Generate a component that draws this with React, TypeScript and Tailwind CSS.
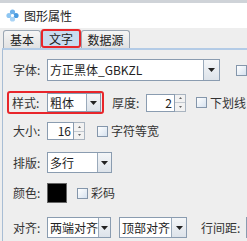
import React from "react";

const font = { fontFamily: '"Noto Sans CJK SC", "Noto Sans", sans-serif' };

function Arrow({ w }: { w: number }) {
  return (
    <div
      className="h-full shrink-0 flex items-center justify-center border-l border-[#9aaabb] bg-gradient-to-b from-[#f4f6f8] to-[#dde3ea]"
      style={{ width: w }}
    >
      <svg width="7" height="4" viewBox="0 0 7 4">
        <path d="M0 0 L7 0 L3.5 4 Z" fill="#222" />
      </svg>
    </div>
  );
}

function Combo({
  text,
  width,
  height = 21,
  arrow = 15,
}: {
  text: string;
  width: number;
  height?: number;
  arrow?: number;
}) {
  return (
    <div className="flex items-stretch border border-[#8a9cb0] bg-white" style={{ width, height }}>
      <div className="flex-1 flex items-center pl-[2px] text-[12px] text-[#222] overflow-hidden whitespace-nowrap">
        {text}
      </div>
      <Arrow w={arrow} />
    </div>
  );
}

function Spinner({ value, width }: { value: string; width: number }) {
  return (
    <div className="flex items-stretch h-[18px]" style={{ width }}>
      <div className="flex-1 flex items-center justify-end pr-[2px] border border-[#8a9cb0] bg-white text-[12px] text-[#222]">
        {value}
      </div>
      <div className="w-[11px] flex flex-col border border-l-0 border-[#a9b4c0] bg-[#f2f2f2]">
        <div className="flex-1 flex items-center justify-center border-b border-[#c3c9d0]">
          <svg width="3" height="2" viewBox="0 0 3 2">
            <path d="M0 2 L1.5 0 L3 2 Z" fill="#666" />
          </svg>
        </div>
        <div className="flex-1 flex items-center justify-center">
          <svg width="3" height="2" viewBox="0 0 3 2">
            <path d="M0 0 L3 0 L1.5 2 Z" fill="#666" />
          </svg>
        </div>
      </div>
    </div>
  );
}

function Check({ label }: { label?: string }) {
  return (
    <div className="flex items-center gap-[3px]">
      <div className="w-[11px] h-[11px] border border-[#8496ab] bg-gradient-to-br from-[#ffffff] to-[#d6e2ef]" />
      {label && <span className="text-[12px] text-[#333]">{label}</span>}
    </div>
  );
}

function Label({ text, w = 34 }: { text: string; w?: number }) {
  return (
    <span className="text-[12px] text-[#333] shrink-0" style={{ width: w }}>
      {text}
    </span>
  );
}

export default function App() {
  return (
    <div className="w-[247px] h-[241px] overflow-hidden bg-[#eeeeee] relative" style={font}>
      <div className="h-[3px] bg-[#cfd3d8]" />
      <div className="h-[25px] bg-white flex items-center pl-[6px] gap-[5px]">
        <svg width="13" height="13" viewBox="0 0 13 13">
          <circle cx="6.5" cy="3" r="2.6" fill="#6fb2ea" />
          <circle cx="3" cy="6.5" r="2.6" fill="#8ec6f2" />
          <circle cx="10" cy="6.5" r="2.6" fill="#4a9be0" />
          <circle cx="6.5" cy="10" r="2.6" fill="#a9d3f5" />
          <circle cx="6.5" cy="6.5" r="1.6" fill="#ffffff" />
        </svg>
        <span className="text-[12px] text-[#222]">图形属性</span>
      </div>
      <div className="h-[20px] flex items-end pl-[3px]">
        <div className="w-[38px] h-[18px] flex items-center justify-center border border-b-0 border-[#9aa6b3] rounded-t-[3px] bg-gradient-to-b from-[#f5f5f5] to-[#e2e2e2] text-[12px] text-[#222]">
          基本
        </div>
        <div className="w-[40px] h-[19px] flex items-center justify-center border-2 border-[#e8262b] rounded-[3px] bg-[#c9dbef] text-[12px] text-[#222]">
          文字
        </div>
        <div className="w-[49px] h-[18px] flex items-center justify-center border border-b-0 border-[#9aa6b3] rounded-t-[3px] bg-gradient-to-b from-[#f5f5f5] to-[#e2e2e2] text-[12px] text-[#222]">
          数据源
        </div>
      </div>
      <div className="ml-[2px] h-full border-t-2 border-l border-t-[#b3cbe6] border-l-[#a8bdd4] pt-[9px]">
        <div className="flex items-center h-[22px] pl-[10px]">
          <Label text="字体:" />
          <Combo text="方正黑体_GBKZL" width={173} height={22} arrow={16} />
          <div className="ml-[16px]">
            <Check />
          </div>
        </div>
        <div className="flex items-center mt-[10px]">
          <div className="ml-[4px] h-[23px] flex items-center border-2 border-[#e8262b] rounded-[3px] pl-[3px] pr-[1px]">
            <Label text="样式:" w={35} />
            <Combo text="粗体" width={54} height={19} arrow={14} />
          </div>
          <span className="ml-[8px] text-[12px] text-[#333] w-[34px]">厚度:</span>
          <Spinner value="2" width={40} />
          <div className="ml-[10px]">
            <Check label="下划线" />
          </div>
        </div>
        <div className="flex items-center mt-[8px] pl-[10px]">
          <Label text="大小:" />
          <Spinner value="16" width={38} />
          <div className="ml-[12px]">
            <Check label="字符等宽" />
          </div>
        </div>
        <div className="flex items-center h-[21px] mt-[12px] pl-[10px]">
          <Label text="排版:" />
          <Combo text="多行" width={65} arrow={14} />
        </div>
        <div className="flex items-center h-[20px] mt-[10px] pl-[10px]">
          <Label text="颜色:" />
          <div className="w-[20px] h-[20px] bg-black border border-[#666]" />
          <div className="ml-[10px]">
            <Check label="彩码" />
          </div>
        </div>
        <div className="flex items-center h-[21px] mt-[14px] pl-[10px]">
          <Label text="对齐:" />
          <Combo text="两端对齐" width={64} arrow={12} />
          <div className="ml-[8px]">
            <Combo text="顶部对齐" width={68} arrow={15} />
          </div>
          <span className="ml-[14px] text-[12px] text-[#333] whitespace-nowrap">行间距:</span>
          <div className="ml-[6px] w-[20px] h-[21px] shrink-0 border border-[#8a9cb0] bg-white" />
        </div>
      </div>
    </div>
  );
}
